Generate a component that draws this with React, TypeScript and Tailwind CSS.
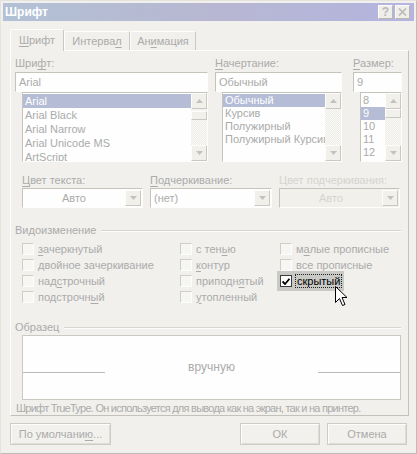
import React from "react";

// underlined accelerator letter
const U = ({ c }: { c: string }) => (
  <span className="underline underline-offset-[2px] decoration-[1px]">{c}</span>
);

function Arrow({ down }: { down?: boolean }) {
  return (
    <div className="w-[16px] h-[16px] shrink-0 bg-[#f1f0eb] border border-t-[#fdfdfb] border-l-[#fdfdfb] border-r-[#c9c8c1] border-b-[#c9c8c1] flex items-center justify-center">
      <svg width="7" height="4" viewBox="0 0 7 4">
        {down ? (
          <polygon points="0,0 7,0 3.5,4" fill="#c2c2c2" />
        ) : (
          <polygon points="0,4 7,4 3.5,0" fill="#c2c2c2" />
        )}
      </svg>
    </div>
  );
}

function ScrollBar({ thumb }: { thumb: string }) {
  return (
    <div className="w-[16px] h-full flex flex-col bg-[repeating-conic-gradient(#ecebe6_0_25%,#fbfbf9_0_50%)] bg-[length:2px_2px]">
      <Arrow />
      <div className={`${thumb} h-[9px] bg-[#f1f0eb] border border-t-[#fdfdfb] border-l-[#fdfdfb] border-r-[#c9c8c1] border-b-[#c9c8c1]`} />
      <div className="flex-1" />
      <Arrow down />
    </div>
  );
}

function ListBox({
  items,
  sel,
  rowH,
  thumb,
  cls,
}: {
  items: string[];
  sel: number;
  rowH: string;
  thumb: string;
  cls: string;
}) {
  return (
    <div className={`${cls} flex bg-[#fdfefd] border border-t-[#c4c3bc] border-l-[#c4c3bc] border-r-[#fdfdfb] border-b-[#fdfdfb] overflow-hidden`}>
      <div className="flex-1 min-w-0 flex flex-col pt-[1px]">
        {items.map((it, i) => (
          <div
            key={it}
            className={`${rowH} pl-[2px] whitespace-nowrap ${i === sel ? "bg-[#b5bcd5] text-white" : ""}`}
          >
            {it}
          </div>
        ))}
      </div>
      <ScrollBar thumb={thumb} />
    </div>
  );
}

function Combo({ text, center, disabled, w }: { text: string; center?: boolean; disabled?: boolean; w: string }) {
  return (
    <div className={`${w} h-[20px] flex border border-t-[#c4c3bc] border-l-[#c4c3bc] border-r-[#fdfdfb] border-b-[#fdfdfb] ${disabled ? "bg-[#f1f0eb]" : "bg-[#fdfefd]"}`}>
      <div className={`flex-1 leading-[18px] ${center ? "text-center" : "pl-[3px]"} ${disabled ? "text-[#d4d4d0]" : ""}`}>
        {text}
      </div>
      <div className="py-[1px] pr-[1px]">
        <Arrow down />
      </div>
    </div>
  );
}

function Check({ children }: { children: React.ReactNode }) {
  return (
    <div className="h-[16px] flex items-center">
      <div className="w-[12px] h-[12px] border border-t-[#cfcec7] border-l-[#cfcec7] border-r-[#fdfdfb] border-b-[#fdfdfb] bg-[#f6f6f2]" />
      <div className="ml-[4px] whitespace-nowrap">{children}</div>
    </div>
  );
}

function GroupTitle({ children }: { children: React.ReactNode }) {
  return (
    <div className="flex items-center h-[13px] leading-[13px] pr-[7px]">
      <span>{children}</span>
      <div className="flex-1 ml-[5px] h-[2px] border-t border-t-[#d7d6cf] border-b border-b-[#fdfdfb]" />
    </div>
  );
}

function Button({ children, w }: { children: React.ReactNode; w: string }) {
  return (
    <div className={`${w} h-[22px] flex items-center justify-center bg-[#f2f1ed] border border-[#cdccc5] shadow-[inset_1px_1px_0_#fdfdfb,inset_-1px_-1px_0_#dedcd5]`}>
      {children}
    </div>
  );
}

export default function App() {
  return (
    <div className="relative w-[417px] h-[454px] bg-[#f1f0ec] border border-t-[#e4e3de] border-l-[#e4e3de] border-r-[#bdbcb6] border-b-[#bdbcb6] p-[2px] flex flex-col text-[11px] leading-[13px] text-[#ababab] font-['Liberation_Sans',Arial,sans-serif]">
      {/* title bar */}
      <div className="h-[18px] shrink-0 flex items-center pl-[2px] pr-[4px] bg-gradient-to-r from-[#b2c1d5] via-[#b7b7d2] to-[#b4b4df]">
        <span className="font-bold text-[12px] text-white">Шрифт</span>
        <div className="ml-auto flex gap-[2px]">
          <div className="w-[15px] h-[14px] bg-[#efeee9] border border-t-[#fbfbf9] border-l-[#fbfbf9] border-r-[#b8b7b0] border-b-[#b8b7b0] flex items-center justify-center text-[12px] font-bold text-[#b9b9b9]">
            ?
          </div>
          <div className="w-[15px] h-[14px] bg-[#efeee9] border border-t-[#fbfbf9] border-l-[#fbfbf9] border-r-[#b8b7b0] border-b-[#b8b7b0] flex items-center justify-center">
            <svg width="9" height="8" viewBox="0 0 9 8">
              <path d="M1 0.5 L8 7.5 M8 0.5 L1 7.5" stroke="#b9b9b9" strokeWidth="1.6" />
            </svg>
          </div>
        </div>
      </div>

      <div className="pl-[7px] pt-[8px]">
        {/* tabs */}
        <div className="flex items-end h-[21px]">
          <div className="relative z-10 w-[54px] h-[22px] -mb-[1px] bg-[#f1f0ec] border border-b-0 border-t-[#fdfdfb] border-l-[#fdfdfb] border-r-[#c9c8c1] rounded-t-[2px] flex items-start justify-center pt-[4px]">
            <span>
              <U c="Ш" />рифт
            </span>
          </div>
          <div className="w-[66px] h-[19px] border border-b-0 border-t-[#fdfdfb] border-l-[#fdfdfb] border-r-[#c9c8c1] rounded-t-[2px] flex items-center justify-center">
            <span>
              Интерва<U c="л" />
            </span>
          </div>
          <div className="w-[66px] h-[19px] border border-b-0 border-t-[#fdfdfb] border-l-[#fdfdfb] border-r-[#c9c8c1] rounded-t-[2px] flex items-center justify-center">
            <span>
              Ан<U c="и" />мация
            </span>
          </div>
        </div>

        {/* tab panel */}
        <div className="w-[399px] h-[366px] border border-t-[#fdfdfb] border-l-[#fdfdfb] border-r-[#c2c1ba] border-b-[#c2c1ba] pl-[4px] pt-[6px]">
          {/* row 1 */}
          <div className="flex">
            <div className="w-[193px]">
              <div className="mb-[2px]">
                Шри<U c="ф" />т:
              </div>
              <div className="h-[20px] bg-[#fdfefd] border border-t-[#c4c3bc] border-l-[#c4c3bc] border-r-[#fdfdfb] border-b-[#fdfdfb] pl-[3px] leading-[18px]">
                Arial
              </div>
              <ListBox
                cls="ml-[7px] h-[70px]"
                items={["Arial", "Arial Black", "Arial Narrow", "Arial Unicode MS", "ArtScript"]}
                sel={0}
                rowH="h-[14px] leading-[14px]"
                thumb="mt-[2px]"
              />
            </div>
            <div className="w-[127px] ml-[7px]">
              <div className="mb-[2px]">
                <U c="Н" />ачертание:
              </div>
              <div className="h-[20px] bg-[#fdfefd] border border-t-[#c4c3bc] border-l-[#c4c3bc] border-r-[#fdfdfb] border-b-[#fdfdfb] pl-[3px] leading-[18px]">
                Обычный
              </div>
              <ListBox
                cls="ml-[7px] h-[70px]"
                items={["Обычный", "Курсив", "Полужирный", "Полужирный Курсив"]}
                sel={0}
                rowH="h-[13px] leading-[13px]"
                thumb="hidden"
              />
            </div>
            <div className="w-[49px] ml-[11px]">
              <div className="mb-[2px]">
                <U c="Р" />азмер:
              </div>
              <div className="h-[20px] bg-[#fdfefd] border border-t-[#c4c3bc] border-l-[#c4c3bc] border-r-[#fdfdfb] border-b-[#fdfdfb] pl-[3px] leading-[18px]">
                9
              </div>
              <ListBox
                cls="ml-[7px] h-[70px]"
                items={["8", "9", "10", "11", "12"]}
                sel={1}
                rowH="h-[13px] leading-[13px]"
                thumb="mt-[0px]"
              />
            </div>
          </div>

          {/* row 2 */}
          <div className="flex ml-[7px] mt-[12px]">
            <div className="w-[121px]">
              <div className="mb-[1px]">
                <U c="Ц" />вет текста:
              </div>
              <Combo w="w-[121px]" text="Авто" center />
            </div>
            <div className="w-[122px] ml-[7px]">
              <div className="mb-[1px]">
                <U c="П" />одчеркивание:
              </div>
              <Combo w="w-[122px]" text="(нет)" />
            </div>
            <div className="w-[121px] ml-[7px]">
              <div className="mb-[1px] text-[#d4d4d0] whitespace-nowrap">Цвет подчеркивания:</div>
              <Combo w="w-[121px]" text="Авто" center disabled />
            </div>
          </div>

          {/* effects */}
          <div className="mt-[16px]">
            <GroupTitle>Видоизменение</GroupTitle>
            <div className="flex ml-[7px] mt-[4px]">
              <div className="w-[158px]">
                <Check>
                  <U c="з" />ачеркнутый
                </Check>
                <Check>
                  <U c="д" />войное зачеркивание
                </Check>
                <Check>
                  над<U c="с" />трочный
                </Check>
                <Check>
                  подстрочн<U c="ы" />й
                </Check>
              </div>
              <div className="w-[100px]">
                <Check>
                  с тен<U c="ь" />ю
                </Check>
                <Check>
                  <U c="к" />онтур
                </Check>
                <Check>
                  приподн<U c="я" />тый
                </Check>
                <Check>
                  <U c="у" />топленный
                </Check>
              </div>
              <div>
                <Check>
                  м<U c="а" />лые прописные
                </Check>
                <Check>
                  <U c="в" />се прописные
                </Check>
                <div className="h-[16px] flex items-center">
                  <div className="-ml-[3px] -my-[2px] pl-[3px] pr-[2px] h-[20px] flex items-center bg-[#c9c9c5]">
                    <div className="w-[12px] h-[12px] border border-[#3c3c3c] bg-[#fbfbfb] flex items-center justify-center">
                      <svg width="8" height="7" viewBox="0 0 8 7">
                        <path d="M0.5 3.5 L3 6 L7.5 0.8" stroke="#000" strokeWidth="1.8" fill="none" />
                      </svg>
                    </div>
                    <div className="ml-[3px] px-[1px] border border-dotted border-[#222] text-black leading-[12px]">
                      скрытый
                    </div>
                  </div>
                </div>
              </div>
            </div>
          </div>

          {/* sample */}
          <div className="mt-[16px]">
            <GroupTitle>Образец</GroupTitle>
            <div className="ml-[7px] mt-[1px] w-[379px] h-[65px] bg-[#fdfefd] border border-[#cac9c2] flex items-center">
              <div className="w-[82px] h-[1px] bg-[#b9b9b9] mt-[10px]" />
              <div className="flex-1 text-center text-[12px]">вручную</div>
              <div className="w-[82px] h-[1px] bg-[#b9b9b9] mt-[10px]" />
            </div>
            <div className="ml-[1px] mt-[2px] whitespace-nowrap tracking-[-0.75px]">
              Шрифт TrueType. Он используется для вывода как на экран, так и на принтер.
            </div>
          </div>
        </div>

        {/* buttons */}
        <div className="flex mt-[7px] pr-[7px]">
          <Button w="w-[101px]">
            <span>
              По умолчани<U c="ю" />...
            </span>
          </Button>
          <div className="flex-1" />
          <Button w="w-[80px]">ОК</Button>
          <div className="w-[7px]" />
          <Button w="w-[80px]">Отмена</Button>
        </div>
      </div>

      {/* mouse pointer */}
      <svg className="absolute left-[334px] top-[285px]" width="13" height="21" viewBox="0 0 13 21">
        <path
          d="M0.5 0.5 L0.5 16.5 L4.5 12.5 L7.5 19.5 L10 18.5 L7 11.5 L12 11.5 Z"
          fill="#fff"
          stroke="#000"
          strokeWidth="1"
        />
      </svg>
    </div>
  );
}
